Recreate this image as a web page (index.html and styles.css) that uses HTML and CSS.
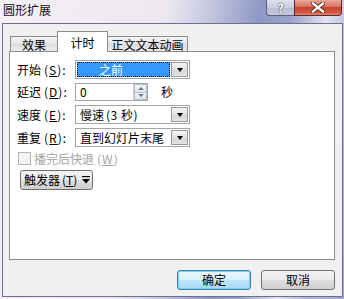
FILE: index.html
```html
<!DOCTYPE html>
<html lang="zh-CN">
<head>
<meta charset="utf-8">
<title>圆形扩展</title>
<link rel="stylesheet" href="styles.css">
</head>
<body>
<div class="win">
  <div class="titlebar">
    <span class="title">圆形扩展</span>
    <div class="caption-btns">
      <div class="cbtn help">?</div>
      <div class="cbtn close">
        <svg width="14" height="11" viewBox="0 0 14 11"><path d="M2 1.5 L12 9.5 M12 1.5 L2 9.5" stroke="#5a1a10" stroke-width="4.2" stroke-linecap="square"/><path d="M2 1.5 L12 9.5 M12 1.5 L2 9.5" stroke="#fff" stroke-width="2.4" stroke-linecap="square"/></svg>
      </div>
    </div>
  </div>
  <div class="client">
    <div class="tabs">
      <div class="tab t1">效果</div>
      <div class="tab active">计时</div>
      <div class="tab t3">正文文本动画</div>
    </div>
    <div class="panel">
      <div class="form">
        <span class="lbl">开始<span class="acc">(<u>S</u>):</span></span>
        <div class="combo r1"><span class="val focus">之前</span><span class="arrow"><i></i></span></div>
        <span class="lbl">延迟<span class="acc">(<u>D</u>):</span></span>
        <div class="spinrow r2">
          <div class="spin"><span class="num">0</span><span class="spinbtns"><b class="up"></b><b class="dn"></b></span></div>
          <span class="unit">秒</span>
        </div>
        <span class="lbl">速度<span class="acc">(<u>E</u>):</span></span>
        <div class="combo r3"><span class="val">慢速<span class="acc2">(3 秒)</span></span><span class="arrow"><i></i></span></div>
        <span class="lbl">重复<span class="acc">(<u>R</u>):</span></span>
        <div class="combo r4"><span class="val">直到幻灯片末尾</span><span class="arrow"><i></i></span></div>
      </div>
      <div class="check"><span class="box"></span><span class="ctext">播完后快退<span class="acc">(<u>W</u>)</span></span></div>
      <div class="trigger"><span>触发器<span class="acc3">(<u>T</u>)</span></span><svg width="8" height="8" viewBox="0 0 8 8"><path d="M0 0.5 H8" stroke="#000" stroke-width="1.4"/><path d="M0 3 H8 L4 7.5 Z" fill="#000"/></svg></div>
    </div>
    <div class="footer">
      <div class="btn default">确定</div>
      <div class="btn">取消</div>
    </div>
  </div>
</div>
</body>
</html>
```
FILE: styles.css
```css
* { box-sizing: border-box; }
html, body { margin: 0; padding: 0; }
body {
  width: 344px; height: 299px; overflow: hidden;
  font-family: "Noto Sans CJK SC", "Liberation Sans", sans-serif;
  font-size: 12px; color: #000;
}
.win {
  width: 344px; height: 299px;
  background: linear-gradient(100deg, #f4eff5 0%, #eee9f1 42%, #c2c5df 54%, #8f98c4 66%, #9aa2ca 74%, #e4e2ee 83%, #b3b7d8 90%, #a1a7cf 100%);
}
.titlebar {
  height: 23px; display: flex; justify-content: space-between; align-items: flex-start;
}
.title { padding: 3px 0 0 3px; line-height: 14px; font-size: 12px; color: #111; }
.caption-btns { display: flex; margin-right: 2px; }
.cbtn { height: 16px; display: flex; align-items: center; justify-content: center; }
.help {
  width: 28px; border: 1px solid #5d6280; border-top: none; border-right: none;
  border-radius: 0 0 0 4px;
  background: linear-gradient(#dfe1ec, #c9ccdf 50%, #b9bdd4 51%, #c6c9dc);
  color: #fff; font-weight: bold; font-size: 12px; line-height: 15px;
  text-shadow: 0 0 2px #555, 0 0 1px #333;
}
.close {
  width: 48px; border: 1px solid #5a2a28; border-top: none;
  border-radius: 0 0 4px 0;
  background: linear-gradient(#e9a99b, #d7705d 45%, #c84330 50%, #d25a44 85%, #e58a6e);
}
.client {
  margin: 0 1px 0 2px; height: 274px;
  border: 1px solid #6d6f8c;
  background: #f0f0f0;
  padding: 7px 7px 0 6px;
}
.tabs {
  display: flex; align-items: flex-end; height: 21px; margin-bottom: -1px;
  padding-left: 1px; position: relative; z-index: 1;
}
.tab {
  height: 15px; margin-bottom: 1px;
  border: 1px solid #898c95; border-bottom: none;
  background: linear-gradient(#f5f5f5, #e6e6e6 50%, #dcdcdc 51%, #ececec);
  display: flex; align-items: center; justify-content: center;
  line-height: 13px; padding-top: 1px;
}
.t1 { width: 47px; border-right: none; }
.t3 { width: 80px; border-left: none; }
.tab.active {
  width: 51px; height: 21px; margin-bottom: 0;
  background: #fff; border-bottom: none;
  align-items: flex-start; padding-top: 4px;
}
.panel {
  height: 209px; border: 1px solid #898c95; background: #fff;
  padding: 8px 0 0 7px;
}
.form {
  display: grid; grid-template-columns: 58px auto; row-gap: 4px; align-items: center;
  justify-items: start;
}
.lbl { line-height: 14px; white-space: nowrap; }
.acc { margin-left: 3px; letter-spacing: 1px; }
.acc2 { margin-left: 2px; letter-spacing: 0.5px; }
.acc3 { margin-left: 2px; }
u { text-decoration: underline; }
.combo {
  width: 115px; height: 19px; border: 1px solid #a0a4ac;
  background: #fff; padding: 1px; display: flex; gap: 1px;
}
.val { flex: 1; line-height: 15px; padding-left: 3px; white-space: nowrap; }
.val.focus {
  background: #3399ff; color: #fff; padding-left: 22px;
  outline: 1px dotted #000; outline-offset: -1px;
}
.arrow {
  width: 17px; border: 1px solid #9a9a9a;
  background: linear-gradient(#f3f3f3, #e2e2e2 50%, #d6d6d6 51%, #e4e4e4);
  display: flex; align-items: center; justify-content: center;
}
.arrow i {
  width: 0; height: 0; border-left: 3.5px solid transparent; border-right: 3.5px solid transparent;
  border-top: 4px solid #000; margin-top: 1px;
}
.spinrow { display: flex; align-items: center; height: 18px; }
.spin {
  width: 73px; height: 18px; border: 1px solid #a0a4ac; background: #fff;
  display: flex;
}
.num { flex: 1; line-height: 16px; padding-left: 4px; }
.spinbtns {
  width: 14px; display: flex; flex-direction: column; border-left: 1px solid #c6cbd3;
}
.spinbtns b {
  flex: 1; display: flex; align-items: center; justify-content: center;
  background: linear-gradient(#f2f4f7, #dfe4ea);
  border: 1px solid #b7bec8;
}
.spinbtns .up { border-bottom: none; }
.spinbtns .up::after {
  content: ""; border-left: 3px solid transparent; border-right: 3px solid transparent;
  border-bottom: 3px solid #6c7a90;
}
.spinbtns .dn::after {
  content: ""; border-left: 3px solid transparent; border-right: 3px solid transparent;
  border-top: 3px solid #6c7a90;
}
.unit { margin-left: 13px; line-height: 14px; }
.check { display: flex; align-items: center; margin: 5px 0 0 1px; height: 13px; }
.box { width: 13px; height: 13px; border: 1px solid #b4b4b4; background: #f4f4f4; }
.ctext { color: #a3a3a3; margin-left: 3px; line-height: 14px; }
.trigger {
  margin: 5px 0 0 3px; width: 73px; height: 20px;
  border: 1px solid #707070; border-radius: 3px;
  background: linear-gradient(#f2f2f2, #ebebeb 50%, #dddddd 51%, #cfcfcf);
  display: flex; align-items: center; padding-left: 3px; gap: 5px;
  line-height: 14px; white-space: nowrap;
}
.footer { display: flex; justify-content: flex-end; gap: 10px; margin-top: 10px; }
.btn {
  width: 74px; height: 20px; border: 1px solid #707070; border-radius: 3px;
  background: linear-gradient(#f2f2f2, #ebebeb 50%, #dddddd 51%, #cfcfcf);
  display: flex; align-items: center; justify-content: center; line-height: 14px;
}
.btn.default {
  border-color: #3c7fb1;
  background: linear-gradient(#eaf6fd, #d9f0fc 50%, #bee6fd 51%, #a7d9f5);
  box-shadow: inset 0 0 0 1px #7ad0f5;
}
```
